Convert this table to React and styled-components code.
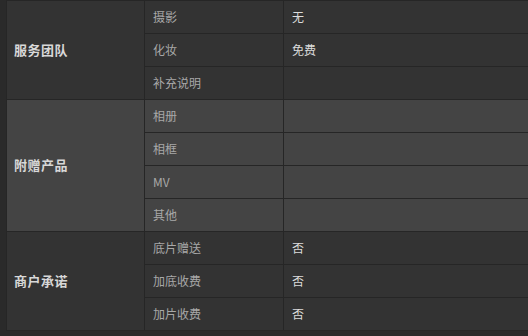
import React from "react";
import styled, { createGlobalStyle } from "styled-components";

const GlobalStyle = createGlobalStyle`
  html, body {
    margin: 0;
    padding: 0;
    background: #2a2a2a;
  }
  body {
    font-family: "Noto Sans CJK SC", "Noto Sans", sans-serif;
  }
`;

const Wrapper = styled.div`
  width: 528px;
  height: 336px;
  padding-left: 6px;
  box-sizing: border-box;
  overflow: hidden;
`;

const Table = styled.table`
  width: 560px;
  border-collapse: collapse;
  table-layout: fixed;
  border: 1px solid #262626;
`;

const Cell = styled.td`
  height: 32px;
  padding: 0 0 0 8px;
  border: 1px solid #262626;
  background: ${(p) => (p.$alt ? "#444444" : "#333333")};
  vertical-align: middle;
  font-size: 12px;
  line-height: 16px;
  white-space: nowrap;
`;

const GroupCell = styled(Cell)`
  padding-left: 7px;
  padding-bottom: 1px;
  font-size: 13px;
  font-weight: bold;
  letter-spacing: 0.5px;
  color: #d8d8d8;
`;

const LabelCell = styled(Cell)`
  color: #a8a8a8;
`;

const ValueCell = styled(Cell)`
  color: #dcdcdc;
`;

const groups = [
  {
    title: "服务团队",
    rows: [
      ["摄影", "无"],
      ["化妆", "免费"],
      ["补充说明", ""],
    ],
  },
  {
    title: "附赠产品",
    alt: true,
    rows: [
      ["相册", ""],
      ["相框", ""],
      ["MV", ""],
      ["其他", ""],
    ],
  },
  {
    title: "商户承诺",
    rows: [
      ["底片赠送", "否"],
      ["加底收费", "否"],
      ["加片收费", "否"],
    ],
  },
];

export default function App() {
  return (
    <>
      <GlobalStyle />
      <Wrapper>
        <Table>
          <colgroup>
            <col style={{ width: 138 }} />
            <col style={{ width: 139 }} />
            <col />
          </colgroup>
          <tbody>
            {groups.map((g) =>
              g.rows.map(([label, value], i) => (
                <tr key={g.title + label}>
                  {i === 0 && (
                    <GroupCell $alt={g.alt} rowSpan={g.rows.length}>
                      {g.title}
                    </GroupCell>
                  )}
                  <LabelCell $alt={g.alt}>{label}</LabelCell>
                  <ValueCell $alt={g.alt}>{value}</ValueCell>
                </tr>
              ))
            )}
          </tbody>
        </Table>
      </Wrapper>
    </>
  );
}
